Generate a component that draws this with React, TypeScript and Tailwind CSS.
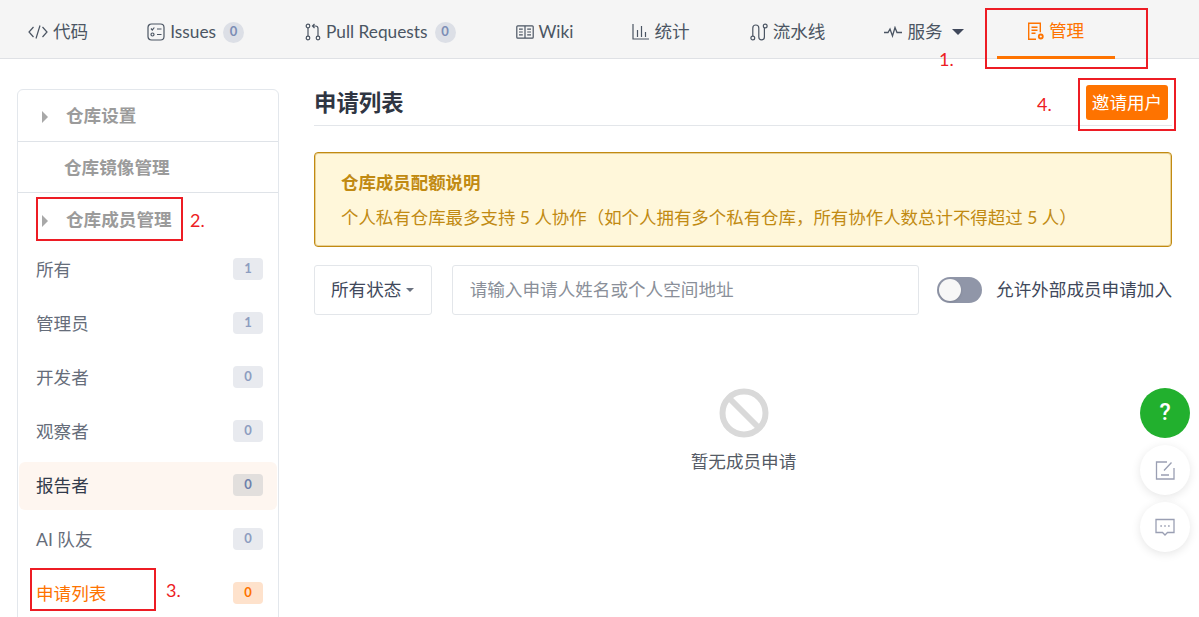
import React from 'react';

const font = "font-['Lato','Noto_Sans_CJK_SC',sans-serif] [text-spacing-trim:space-all]";

const CodeIcon = () => (
    <svg width="20" height="18" viewBox="0 0 20 18" fill="none" stroke="#4b5563" strokeWidth="1.2">
        <path d="M5.5 4 1 9l4.5 5M14.5 4 19 9l-4.5 5M12 2.5 8 15.5"/>
    </svg>
);
const IssueIcon = () => (
    <svg width="18" height="18" viewBox="0 0 18 18" fill="none" stroke="#4b5563" strokeWidth="1.2">
        <rect x="1" y="1" width="16" height="16" rx="3.5"/>
        <path d="M4 5.5 5.3 7l2-2.5M10 6h4.5M10 11.5h4.5"/>
        <circle cx="5.5" cy="11.5" r="1.5"/>
    </svg>
);
const PullIcon = () => (
    <svg width="16" height="18" viewBox="0 0 16 18" fill="none" stroke="#4b5563" strokeWidth="1.2">
        <circle cx="3" cy="3" r="1.8"/>
        <circle cx="3" cy="15" r="1.8"/>
        <circle cx="13" cy="15" r="1.8"/>
        <path d="M3 5v8M13 13V5.5Q13 3 10.5 3H7.5M9.5 1 7.5 3l2 2"/>
    </svg>
);
const WikiIcon = () => (
    <svg width="18" height="14" viewBox="0 0 18 14" fill="none" stroke="#4b5563" strokeWidth="1.2">
        <rect x="0.8" y="0.8" width="16.4" height="12.4" rx="1"/>
        <path d="M9 1v12M3 4.2h3.8M3 7h3.8M3 9.8h3.8M11.2 4.2H15M11.2 7H15M11.2 9.8H15"/>
    </svg>
);
const StatsIcon = () => (
    <svg width="17" height="16" viewBox="0 0 17 16" fill="none" stroke="#4b5563" strokeWidth="1.2">
        <path d="M1 0v15h16M5.5 6v7M9.5 2v11M13.5 8v5"/>
    </svg>
);
const PipelineIcon = () => (
    <svg width="18" height="18" viewBox="0 0 18 18" fill="none" stroke="#4b5563" strokeWidth="1.2">
        <circle cx="2.8" cy="15" r="1.9"/>
        <circle cx="15.2" cy="3" r="1.9"/>
        <path d="M2.8 13V5a3 3 0 0 1 6 0v9a2.8 2.8 0 0 0 5.6 0V5"/>
    </svg>
);
const PulseIcon = () => (
    <svg width="18" height="12" viewBox="0 0 18 12" fill="none" stroke="#4b5563" strokeWidth="1.3">
        <path d="M0 6.5h4L6 3l2.5 7L11 1.5l2 5h5"/>
    </svg>
);
const ManageIcon = () => (
    <svg width="18" height="19" viewBox="0 0 18 19" fill="none" stroke="#fe7300" strokeWidth="1.4">
        <path d="M9 17.3H1.7V1.2h11.6v9"/>
        <path d="M4.5 5.2h6M4.5 8.2h6M4.5 11.2h4"/>
        <circle cx="13.8" cy="14.5" r="2" strokeWidth="1.8"/>
    </svg>
);

const tabs = [
    {icon: <CodeIcon/>, label: "代码", cls: "pl-[28px] pr-[29px]"},
    {icon: <IssueIcon/>, label: "Issues", count: 0, cls: "pl-[30px] pr-[31px] text-[17.3px]"},
    {icon: <PullIcon/>, label: "Pull Requests", count: 0, cls: "pl-[30px] pr-[30px] text-[17.3px]"},
    {icon: <WikiIcon/>, label: "Wiki", cls: "pl-[30px] pr-[29px] text-[17.3px]"},
    {icon: <StatsIcon/>, label: "统计", cls: "pl-[30px] pr-[30px]"},
    {icon: <PipelineIcon/>, label: "流水线", cls: "pl-[30px] pr-[29px]"},
];

const members = [
    {label: "所有", count: 1},
    {label: "管理员", count: 1},
    {label: "开发者", count: 0},
    {label: "观察者", count: 0},
    {label: "报告者", count: 0, hover: true},
    {label: "AI 队友", count: 0},
    {label: "申请列表", count: 0, active: true},
];

const RedBox = ({className}: {className: string}) => (
    <div className={"absolute border-2 border-[#ed1c24] " + className}/>
);

const RedNum = ({className, text}: {className: string, text: string}) => (
    <span className={"absolute text-[18px] leading-6 text-[#ed1c24] " + className}>{text}</span>
);

const Caret = () => (
    <span className="w-0 h-0 border-x-[4.5px] border-x-transparent border-t-[4.5px] border-t-[#6b7280]"/>
);

const App = () => {
    return (
        <div className={"relative w-[1199px] h-[617px] overflow-hidden bg-white text-[17.6px] " + font}>
            <div className="flex h-[59px] bg-[#f5f5f5] border-b border-[#dfe1e5] text-[#4b5563]">
                {tabs.map((tab) => (
                    <div key={tab.label}
                         className={"flex items-center gap-[5px] pt-[6px] " + tab.cls}>
                        {tab.icon}
                        <span>{tab.label}</span>
                        {tab.count !== undefined &&
                            <span className="ml-[2px] w-[21px] h-[21px] flex items-center justify-center rounded-full bg-[#dcdfe6] text-[13px] font-bold text-[#7b8db5]">{tab.count}</span>}
                    </div>
                ))}
                <div className="flex items-center gap-[5px] pl-[30px] pr-[33px] pt-[6px]">
                    <PulseIcon/>
                    <span>服务</span>
                    <span className="ml-[4px] w-0 h-0 border-x-[6px] border-x-transparent border-t-[6px] border-t-[#40485b]"/>
                </div>
                <div className="flex items-center justify-center gap-1 w-[118px] h-[59px] pt-[7px] border-b-[3px] border-[#fe7300] text-[#fe7300]">
                    <ManageIcon/>
                    <span>管理</span>
                </div>
            </div>

            <div className="flex items-start pl-[17px] pt-[30px]">
                <aside className="w-[262px] h-[560px] shrink-0 border border-[#e3e7ec] rounded-md">
                    <div className="flex items-center h-[52px] pl-[24px] pt-[2px] gap-[18px] border-b border-[#dfe3e8] text-[#9b9b9b] font-bold">
                        <span className="w-0 h-0 border-y-[6px] border-y-transparent border-l-[6px] border-l-[#a8a8a8]"/>
                        <span>仓库设置</span>
                    </div>
                    <div className="flex items-center h-[51px] pl-[46px] pt-[2px] border-b border-[#dfe3e8] text-[#9b9b9b] font-bold">
                        仓库镜像管理
                    </div>
                    <div className="flex items-center h-[53px] pl-[24px] pt-[2px] gap-[18px] text-[#9b9b9b] font-bold">
                        <span className="w-0 h-0 border-y-[6px] border-y-transparent border-l-[6px] border-l-[#a8a8a8]"/>
                        <span>仓库成员管理</span>
                    </div>
                    <ul>
                        {members.map((m) => (
                            <li key={m.label}
                                className={"flex items-center justify-between h-[48px] mb-[6px] mx-px pl-[17px] pr-[14px] rounded-md " +
                                    (m.hover ? "bg-[#fef6f0] text-[#333b4b]" : m.active ? "text-[#fe7300]" : "text-[#666d7a]")}>
                                <span className="pt-[1px]">{m.label}</span>
                                <span className={"w-[30px] h-[22px] mb-[2px] flex items-center justify-center rounded text-[13px] font-bold " +
                                    (m.hover ? "bg-[#e2dfdd] text-[#6d80ab]" : m.active ? "bg-[#fee2cc] text-[#fe7300]" : "bg-[#e8eaef] text-[#8d9dc0]")}>{m.count}</span>
                            </li>
                        ))}
                    </ul>
                </aside>

                <main className="w-[858px] ml-[35px] -mt-[11px]">
                    <div className="flex items-end justify-between h-[48px] border-b border-[#e3e6ea]">
                        <h2 className="text-[22.4px] font-bold text-[#2f3542] leading-none pb-[11px]">申请列表</h2>
                        <button className="mr-[4px] w-[82px] h-[35px] mb-[5px] pt-[1px] flex items-center justify-center rounded-[3px] bg-[#fe7300] text-white">邀请用户</button>
                    </div>
                    <div className="mt-[26px] h-[95px] px-[26px] pt-[17px] bg-[#fff7da] border border-[#c18a12] rounded text-[#c18a12] text-[17.45px] shadow-[inset_0_0_0_1px_rgba(193,138,18,0.35)]">
                        <div className="font-bold leading-[26px]">仓库成员配额说明</div>
                        <div className="mt-[9px] leading-[26px] whitespace-nowrap">个人私有仓库最多支持 5 人协作（如个人拥有多个私有仓库，所有协作人数总计不得超过 5 人）</div>
                    </div>
                    <div className="flex items-center mt-[18px]">
                        <div className="flex items-center gap-[5px] h-[50px] w-[118px] pl-[16px] border border-[#e3e6ea] rounded-[3px] text-[#40485b]">
                            <span>所有状态</span>
                            <Caret/>
                        </div>
                        <input readOnly placeholder="请输入申请人姓名或个人空间地址"
                               className="ml-[20px] w-[469px] h-[50px] px-[17px] pb-[2px] border border-[#e3e6ea] rounded-[3px] outline-none placeholder:text-[#8a8f99]"/>
                        <div className="ml-[18px] w-[45px] h-[26px] flex items-center pl-[2px] rounded-full bg-[#9096a8]">
                            <span className="w-[22px] h-[22px] rounded-full bg-[#f7f7f7] shadow-sm"/>
                        </div>
                        <span className="ml-[14px] text-[#40485b] whitespace-nowrap">允许外部成员申请加入</span>
                    </div>
                    <div className="flex flex-col items-center mt-[73px] ml-[1px]">
                        <svg width="50" height="50" viewBox="0 0 50 50" fill="none" stroke="#d9d9d9" strokeWidth="6">
                            <circle cx="25" cy="25" r="21.5"/>
                            <path d="M10 10l30 30"/>
                        </svg>
                        <span className="mt-[11px] text-[#555b66]">暂无成员申请</span>
                    </div>
                </main>
            </div>

            {/* annotations drawn over the page */}
            <RedBox className="left-[985px] top-[8px] w-[163px] h-[61px]"/>
            <RedBox className="left-[1078px] top-[78px] w-[98px] h-[53px]"/>
            <RedBox className="left-[36px] top-[197px] w-[147px] h-[44px]"/>
            <RedBox className="left-[30px] top-[568px] w-[126px] h-[43px]"/>
            <RedNum className="left-[939px] top-[47px]" text="1."/>
            <RedNum className="left-[190px] top-[208px]" text="2."/>
            <RedNum className="left-[166px] top-[578px]" text="3."/>
            <RedNum className="left-[1037px] top-[92px]" text="4."/>

            {/* floating help buttons */}
            <div className="absolute left-[1140px] top-[388px] flex flex-col gap-[7px]">
                <div className="w-[50px] h-[50px] rounded-full bg-[#22b02e] flex items-center justify-center text-white text-[23px] font-['Roboto'] font-medium">?</div>
                <div className="w-[50px] h-[50px] rounded-full bg-white shadow-[0_2px_10px_rgba(0,0,0,0.1)] flex items-center justify-center">
                    <svg width="20" height="20" viewBox="0 0 20 20" fill="none" stroke="#9a9fb3" strokeWidth="1.3">
                        <path d="M12 2H1.5v17H19V8M6 15h8M9 10.5 16.5 2.5"/>
                    </svg>
                </div>
                <div className="w-[50px] h-[50px] rounded-full bg-white shadow-[0_2px_10px_rgba(0,0,0,0.1)] flex items-center justify-center">
                    <svg width="20" height="19" viewBox="0 0 20 19" fill="none" stroke="#9a9fb3" strokeWidth="1.3">
                        <path d="M1 1.5h18v13h-6.5L10 17l-2.5-2.5H1z"/>
                        <path d="M5.5 8h1.2M9.4 8h1.2M13.3 8h1.2" strokeWidth="1.8"/>
                    </svg>
                </div>
            </div>
        </div>
    );
};

export default App;
